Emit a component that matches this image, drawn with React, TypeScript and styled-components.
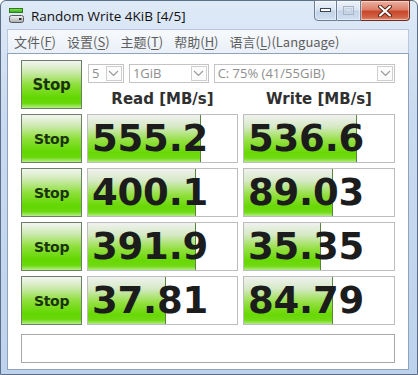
import React from 'react';
import styled, { createGlobalStyle } from 'styled-components';

type Result = {
  read: string;
  write: string;
};

const results: Result[] = [
  { read: '555.2', write: '536.6' },
  { read: '400.1', write: '89.03' },
  { read: '391.9', write: '35.35' },
  { read: '37.81', write: '84.79' },
];

// CrystalDiskMark meter is log scale: log10(MB/s * 10) / 5
const meter = (value: string) => {
  const v = parseFloat(value);
  return Math.min(1, Math.max(0, Math.log10(v * 10) / 5)) * 100;
};

const menus = [
  { label: '文件', key: 'F' },
  { label: '设置', key: 'S' },
  { label: '主题', key: 'T' },
  { label: '帮助', key: 'H' },
];

function AppIcon() {
  return (
    <svg width="17" height="17" viewBox="0 0 17 17">
      <defs>
        <linearGradient id="bar" x1="0" y1="0" x2="0" y2="1">
          <stop offset="0" stopColor="#8fe85a" />
          <stop offset="1" stopColor="#2fa818" />
        </linearGradient>
        <linearGradient id="disk" x1="0" y1="0" x2="0" y2="1">
          <stop offset="0" stopColor="#f4f4f4" />
          <stop offset="1" stopColor="#a9abae" />
        </linearGradient>
      </defs>
      <rect x="1.5" y="1.5" width="13" height="4" fill="url(#bar)" stroke="#2c7a1c" />
      <rect x="1.5" y="8.5" width="14" height="7" rx="2" fill="url(#disk)" stroke="#55585c" />
      <rect x="11" y="11" width="2.5" height="2" fill="#2d2f31" />
    </svg>
  );
}

function Chevron() {
  return (
    <svg width="11" height="7" viewBox="0 0 11 7">
      <path d="M1 1 L5.5 5.5 L10 1" fill="none" stroke="#9a9a9a" strokeWidth="1.2" />
    </svg>
  );
}

function App() {
  return (
    <>
      <GlobalStyle />
      <Window>
        <TitleBar>
          <AppIcon />
          <Title>Random Write 4KiB [4/5]</Title>
          <CaptionGroup>
            <CaptionButton $kind="min">
              <svg width="11" height="5" viewBox="0 0 11 5">
                <rect x="0.5" y="0.5" width="10" height="3" fill="#fff" stroke="#3a4658" />
              </svg>
            </CaptionButton>
            <CaptionButton $kind="max">
              <svg width="11" height="9" viewBox="0 0 11 9">
                <rect x="0.5" y="0.5" width="10" height="8" fill="none" stroke="#a8b4c4" />
                <rect x="2.5" y="2.5" width="6" height="4" fill="none" stroke="#c6d0dc" />
              </svg>
            </CaptionButton>
            <CaptionButton $kind="close">
              <svg width="14" height="12" viewBox="0 0 14 12">
                <path d="M2 1.5 L12 10.5 M12 1.5 L2 10.5" stroke="#5a2418" strokeWidth="4" strokeLinecap="round" />
                <path d="M2 1.5 L12 10.5 M12 1.5 L2 10.5" stroke="#fff" strokeWidth="2" strokeLinecap="round" />
              </svg>
            </CaptionButton>
          </CaptionGroup>
        </TitleBar>
        <MenuBar>
          {menus.map((m) => (
            <MenuItem key={m.key}>
              {m.label}(<u>{m.key}</u>)
            </MenuItem>
          ))}
          <MenuItem>
            语言(<u>L</u>)(Language)
          </MenuItem>
        </MenuBar>
        <Client>
          <Board>
            <StopButton $big>Stop</StopButton>
            <Header>
              <ComboRow>
                <Combo $width={36}>
                  <ComboText>5</ComboText>
                  <ComboArrow>
                    <Chevron />
                  </ComboArrow>
                </Combo>
                <Combo $width={80}>
                  <ComboText>1GiB</ComboText>
                  <ComboArrow>
                    <Chevron />
                  </ComboArrow>
                </Combo>
                <Combo $width={182}>
                  <ComboText>C: 75% (41/55GiB)</ComboText>
                  <ComboArrow>
                    <Chevron />
                  </ComboArrow>
                </Combo>
              </ComboRow>
              <LabelRow>
                <Label>Read [MB/s]</Label>
                <Label>Write [MB/s]</Label>
              </LabelRow>
            </Header>
            {results.map((r, i) => (
              <React.Fragment key={i}>
                <StopButton>Stop</StopButton>
                <ResultCell>
                  <Fill style={{ width: `${meter(r.read)}%` }} />
                  <Value>{r.read}</Value>
                </ResultCell>
                <ResultCell>
                  <Fill style={{ width: `${meter(r.write)}%` }} />
                  <Value>{r.write}</Value>
                </ResultCell>
              </React.Fragment>
            ))}
          </Board>
          <Comment />
        </Client>
      </Window>
    </>
  );
}

const GlobalStyle = createGlobalStyle`
  html, body {
    margin: 0;
    padding: 0;
    background: #fff;
  }

  body {
    width: 418px;
    height: 375px;
    overflow: hidden;
  }
`;

const Window = styled.div`
  box-sizing: border-box;
  width: 418px;
  height: 375px;
  display: flex;
  flex-direction: column;
  padding: 0 8px 4px 6px;
  border: 1px solid #5d6f88;
  border-radius: 6px 6px 0 0;
  background: linear-gradient(to bottom, #dfeaf7 0%, #c9dbf0 30%, #bdd3ed 100%);
`;

const TitleBar = styled.div`
  height: 28px;
  display: flex;
  align-items: center;
  gap: 6px;
  padding-left: 1px;
`;

const Title = styled.div`
  font-family: 'Open Sans', 'Noto Sans', sans-serif;
  font-size: 13.5px;
  color: #101010;
  padding-top: 1px;
`;

const CaptionGroup = styled.div`
  display: flex;
  align-self: flex-start;
  margin: -1px -1px 0 auto;
  height: 21px;
`;

const CaptionButton = styled.div<{ $kind: 'min' | 'max' | 'close' }>`
  box-sizing: border-box;
  width: ${({ $kind }) => ($kind === 'close' ? 49 : $kind === 'min' ? 23 : 24)}px;
  height: 21px;
  display: flex;
  align-items: center;
  justify-content: center;
  border: 1px solid ${({ $kind }) => ($kind === 'close' ? '#6b2d20' : '#6c7d94')};
  border-left-width: ${({ $kind }) => ($kind === 'min' ? 1 : 0)}px;
  border-radius: ${({ $kind }) => ($kind === 'min' ? '0 0 0 4px' : $kind === 'close' ? '0 0 4px 0' : '0')};
  background: ${({ $kind }) =>
    $kind === 'close'
      ? 'linear-gradient(to bottom, #ecb1a2 0%, #dc806a 45%, #c9472a 55%, #d26346 85%, #e08a70 100%)'
      : 'linear-gradient(to bottom, #eef3fa 0%, #d9e4f2 45%, #c3d3e8 55%, #d0def0 100%)'};
  box-shadow: inset 0 0 0 1px rgba(255, 255, 255, 0.45);
`;

const MenuBar = styled.div`
  box-sizing: border-box;
  height: 24px;
  display: flex;
  align-items: center;
  gap: 9px;
  padding-left: 5px;
  border: 1px solid #b7c7dc;
  border-bottom: none;
  background: linear-gradient(to bottom, #f7fafd 0%, #eaf0f8 100%);
`;

const MenuItem = styled.div`
  font-family: 'Noto Sans CJK SC', 'Noto Sans', sans-serif;
  font-size: 13px;
  color: #5e5e5e;
  white-space: nowrap;
  padding: 0 1px;

  u {
    text-underline-offset: 2px;
  }
`;

const Client = styled.div`
  flex: 1;
  display: flex;
  flex-direction: column;
  gap: 9px;
  padding: 6px 0 0 13px;
  border: 1px solid #8ea2bc;
  background: #fff;
`;

const Board = styled.div`
  display: grid;
  grid-template-columns: 61px 151px 152px;
  grid-auto-rows: 49px;
  gap: 5px;
`;

const StopButton = styled.div<{ $big?: boolean }>`
  box-sizing: border-box;
  display: flex;
  align-items: center;
  justify-content: center;
  border: 1px solid #6e7f69;
  background: linear-gradient(
    to bottom,
    #f3f5f1 0%,
    #cfeab4 22%,
    #8fe03c 50%,
    #62d700 78%,
    #6ad80c 90%,
    #b5ee88 100%
  );
  font-family: 'DejaVu Sans', sans-serif;
  font-weight: bold;
  font-size: ${({ $big }) => ($big ? 15 : 14)}px;
  color: #1b3410;
  letter-spacing: -0.3px;
`;

const Header = styled.div`
  grid-column: 2 / 4;
  display: flex;
  flex-direction: column;
`;

const ComboRow = styled.div`
  display: flex;
  gap: 5px;
  margin-top: 4px;
  padding-left: 1px;
`;

const Combo = styled.div<{ $width: number }>`
  box-sizing: border-box;
  width: ${({ $width }) => $width}px;
  height: 19px;
  display: flex;
  padding: 1px;
  border: 1px solid #c4c4c4;
  background: #fff;
`;

const ComboText = styled.div`
  flex: 1;
  display: flex;
  align-items: center;
  padding-left: 2px;
  font-family: 'Open Sans', 'Noto Sans', sans-serif;
  font-size: 13px;
  line-height: 15px;
  color: #8e8e8e;
  white-space: nowrap;
`;

const ComboArrow = styled.div`
  box-sizing: border-box;
  width: 16px;
  display: flex;
  align-items: center;
  justify-content: center;
  border: 1px solid #cfcfcf;
  background: #fcfcfc;
`;

const LabelRow = styled.div`
  display: grid;
  grid-template-columns: 151px 152px;
  gap: 5px;
  margin-top: 7px;
`;

const Label = styled.div`
  text-align: center;
  font-family: 'DejaVu Sans', sans-serif;
  font-weight: bold;
  font-size: 15px;
  line-height: 18px;
  color: #303030;
`;

const ResultCell = styled.div`
  position: relative;
  box-sizing: border-box;
  border: 1px solid #bdbdbd;
  background: #fff;
  overflow: hidden;
`;

const Fill = styled.div`
  position: absolute;
  left: 0;
  top: 0;
  bottom: 0;
  border-right: 1px solid #5a8540;
  background: linear-gradient(
    to bottom,
    #f0f2ee 0%,
    #d6e9c6 25%,
    #93e040 55%,
    #68d804 80%,
    #72da16 92%,
    #b2ec84 100%
  );
`;

const Value = styled.div`
  position: relative;
  padding-left: 4px;
  font-family: 'DejaVu Sans', sans-serif;
  font-weight: bold;
  font-size: 37px;
  line-height: 47px;
  color: #1c1c1c;
  letter-spacing: -0.2px;
`;

const Comment = styled.div`
  box-sizing: border-box;
  width: 374px;
  height: 29px;
  border: 1px solid #a8a8a8;
  background: #fff;
`;

export default App;
